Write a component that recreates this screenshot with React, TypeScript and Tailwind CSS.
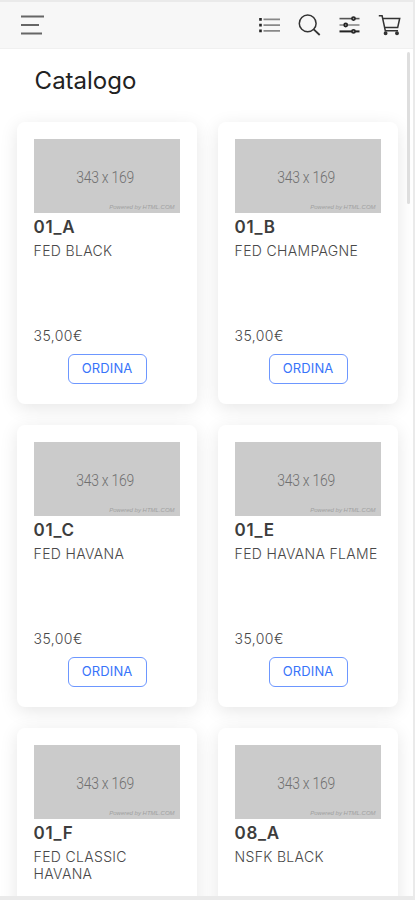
interface Product {
    code: string;
    name: string;
    price: string;
}

const products: Product[] = [
    { code: '01_A', name: 'FED BLACK', price: '35,00€' },
    { code: '01_B', name: 'FED CHAMPAGNE', price: '35,00€' },
    { code: '01_C', name: 'FED HAVANA', price: '35,00€' },
    { code: '01_E', name: 'FED HAVANA FLAME', price: '35,00€' },
    { code: '01_F', name: 'FED CLASSIC HAVANA', price: '35,00€' },
    { code: '08_A', name: 'NSFK BLACK', price: '35,00€' },
];

const MenuIcon = () => (
    <svg width="24" height="24" viewBox="0 0 24 24" stroke="#666" strokeWidth="2">
        <path d="M1 3.4h23M1 11.9h18M1 20.4h21" />
    </svg>
);

const ListIcon = () => (
    <svg width="24" height="24" viewBox="0 0 24 24" stroke="#888" strokeWidth="1.7">
        <path d="M6.5 6.3H23M6.5 12.1H23M6.5 17.8H23" />
        <path d="M2.2 6.3h2.6M2.2 12.1h2.6M2.2 17.8h2.6" stroke="#222" strokeWidth="2.8" />
    </svg>
);

const SearchIcon = () => (
    <svg width="24" height="24" viewBox="0 0 24 24" fill="none" stroke="#333" strokeWidth="1.5">
        <circle cx="10.7" cy="10.4" r="8.4" />
        <path d="M16.7 16.3l6 5.7" strokeWidth="1.8" />
    </svg>
);

const FilterIcon = () => (
    <svg width="24" height="24" viewBox="0 0 24 24" fill="#999" stroke="#222" strokeWidth="1.6">
        <path d="M2.5 5.6h20" stroke="#555" />
        <path d="M2.5 12h20" stroke="#888" />
        <path d="M2.5 18.4h20" strokeWidth="2" />
        <circle cx="16.5" cy="5.6" r="1.6" />
        <circle cx="8.7" cy="12" r="1.6" />
        <circle cx="16.5" cy="18.4" r="1.6" />
    </svg>
);

const CartIcon = () => (
    <svg width="24" height="24" viewBox="0 0 24 24" fill="none" stroke="#333" strokeWidth="1.5">
        <path d="M1.8 2.8h3.3L8.3 17.7H21M5.7 5.5h17l-2 9H7.6" />
        <circle cx="8.6" cy="20.3" r="1.2" fill="#333" />
        <circle cx="20" cy="20.3" r="1.2" fill="#333" />
    </svg>
);

const Header = () => (
    <header className="flex h-[47px] shrink-0 items-center justify-between border-b border-[#f0f0f0] bg-[#f7f7f7] pr-3 pl-5">
        <button type="button" aria-label="Menu">
            <MenuIcon />
        </button>
        <div className="flex gap-4">
            <button type="button" aria-label="Lista">
                <ListIcon />
            </button>
            <button type="button" aria-label="Cerca">
                <SearchIcon />
            </button>
            <button type="button" aria-label="Filtri">
                <FilterIcon />
            </button>
            <button type="button" aria-label="Carrello">
                <CartIcon />
            </button>
        </div>
    </header>
);

const ProductCard = ({ product }: { product: Product }) => (
    <div className="flex h-[281.5px] flex-col rounded-lg bg-white px-[17px] pt-[17px] shadow-[0_4px_18px_rgba(0,0,0,0.1)]">
        <div className="relative flex h-[74px] shrink-0 items-center justify-center bg-[#cbcbcb] pt-1 pr-1">
            <span className="scale-x-[0.87] font-[Roboto] text-[16px] leading-none font-light tracking-[-0.3px] text-[#707070]">343 x 169</span>
            <span className="absolute right-[5px] bottom-[3px] font-['Liberation_Sans'] text-[6px] leading-[6px] text-[#a0a0a0] italic">
                Powered by HTML.COM
            </span>
        </div>
        <h2 className="mt-1 text-[17px] leading-5 font-semibold tracking-[0.7px] text-[#3d3d3d]">{product.code}</h2>
        <p className="mt-[5px] h-[77px] text-[14px] leading-[17px] font-light tracking-[0.33px] text-[#484848]">{product.name}</p>
        <p className="mt-2 text-[14px] leading-[18px] font-light tracking-[0.4px] text-[#484848]">{product.price}</p>
        <button
            type="button"
            className="mt-[8.6px] ml-px h-[30px] w-[79px] self-center rounded-md border border-[#6d97ff] text-[13px] leading-none tracking-[0.1px] text-[#3874fa]"
        >
            ORDINA
        </button>
    </div>
);

export default function App() {
    return (
        <div className="relative flex h-[900px] w-[415px] flex-col overflow-hidden border-t-2 border-r-2 border-b-4 border-[#eaeaea] bg-white font-[Inter,sans-serif]">
            <Header />
            <main className="min-h-0 flex-1 overflow-hidden pl-[16.6px]">
                <h1 className="mt-4 ml-[18px] text-[24px] leading-8 text-[#222]">Catalogo</h1>
                <div className="mt-[25px] grid grid-cols-[180px_180px] gap-x-[21px] gap-y-[21.5px]">
                    {products.map((product) => (
                        <ProductCard key={product.code} product={product} />
                    ))}
                </div>
            </main>
            <div className="absolute top-[50px] right-[3.5px] h-[152px] w-[3px] rounded-full bg-[#dedede]" />
        </div>
    );
}
